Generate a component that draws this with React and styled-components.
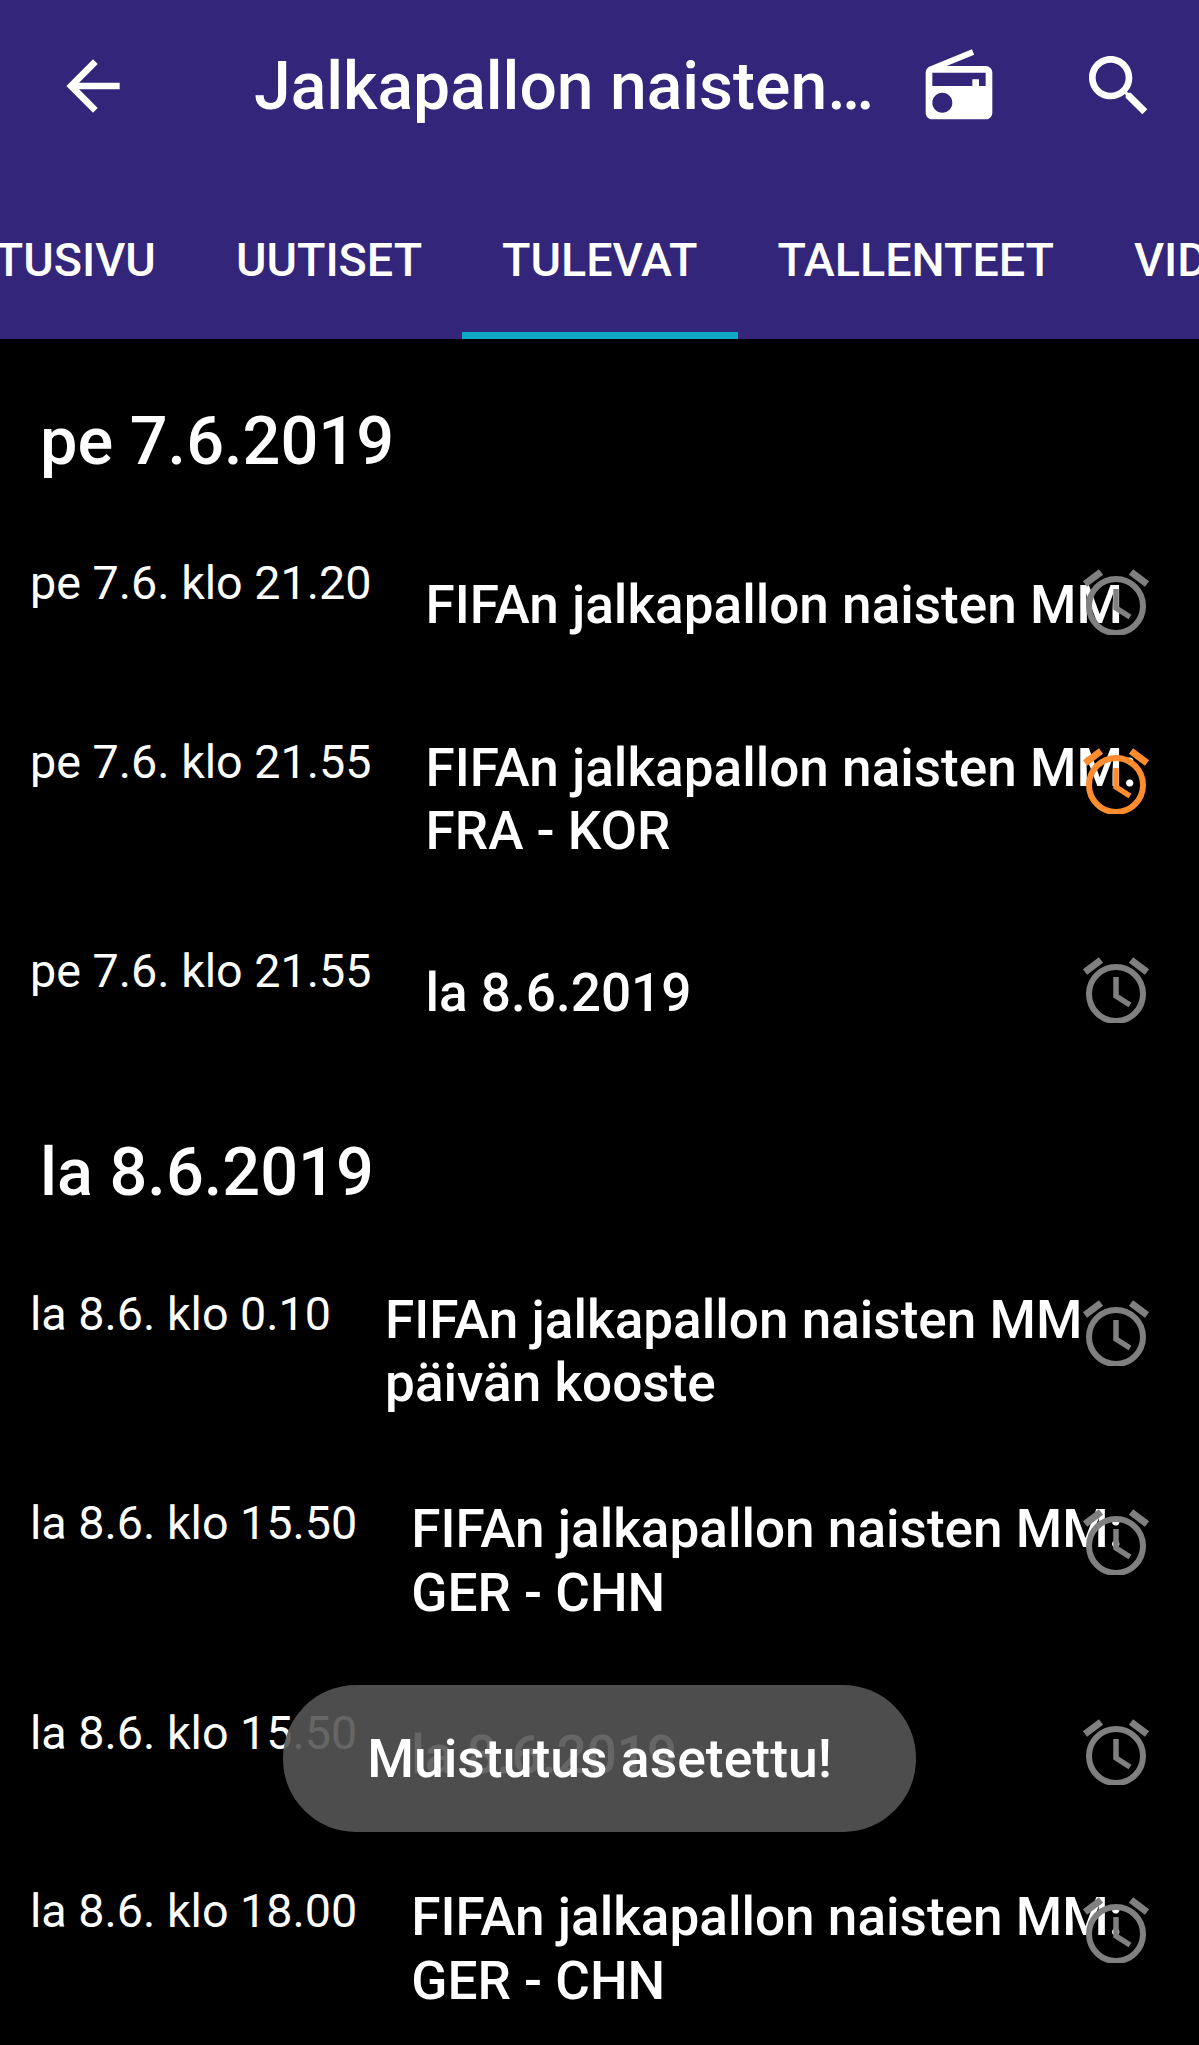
import styled, { createGlobalStyle } from "styled-components"

const GlobalStyle = createGlobalStyle`
  html, body {
    margin: 0;
    padding: 0;
    background: #000;
  }
  * {
    box-sizing: border-box;
  }
`

const Page = styled.div`
  position: relative;
  width: 1199px;
  height: 2045px;
  overflow: hidden;
  background: #000;
  color: #fff;
  font-family: Roboto, "Noto Sans", sans-serif;
`

const Header = styled.header`
  height: 339px;
  background: #32257a;
`

const Toolbar = styled.div`
  display: flex;
  align-items: center;
  height: 172px;
  padding: 0 40px 0 53px;
`

const IconButton = styled.div`
  display: flex;
  flex: none;
  width: 80px;
  height: 80px;
  margin-left: ${(p) => p.$gap || 0}px;
  & > svg {
    width: 80px;
    height: 80px;
    fill: #fff;
  }
`

const Title = styled.h1`
  flex: 1;
  margin: 0;
  padding-left: 121px;
  font-size: 66px;
  font-weight: 500;
  white-space: nowrap;
`

const Tabs = styled.nav`
  height: 167px;
  overflow: hidden;
`

const TabList = styled.div`
  display: flex;
  height: 100%;
  width: max-content;
  margin-left: -72px;
`

const Tab = styled.div`
  display: flex;
  align-items: center;
  padding: 16px 40px 0;
  font-size: 46.67px;
  font-weight: 500;
  white-space: nowrap;
  border-bottom: 7px solid ${(p) => (p.$active ? "#10a8c4" : "transparent")};
`

const Section = styled.section`
  padding-top: ${(p) => p.$top}px;
`

const DayHeading = styled.h2`
  margin: 0 0 ${(p) => p.$gap}px 40px;
  font-size: 66.67px;
  line-height: 70px;
  font-weight: 500;
`

const Row = styled.div`
  position: relative;
  display: flex;
  align-items: flex-start;
  min-height: 96px;
  margin-bottom: 82.5px;
  padding-left: 30px;
`

const When = styled.div`
  flex: none;
  width: max-content;
  margin-right: 54px;
  font-size: 46.67px;
  line-height: 50px;
`

const ShowTitle = styled.div`
  align-self: center;
  white-space: nowrap;
  font-size: 53.1px;
  line-height: 63.5px;
  font-weight: 500;
`

const Alarm = styled.svg`
  position: absolute;
  top: 1px;
  left: 1081px;
  width: 70px;
  height: 76px;
  fill: none;
  stroke: ${(p) => (p.$on ? "#ff8c2e" : "#808080")};
  stroke-width: 6;
`

const Toast = styled.div`
  position: absolute;
  top: 1685px;
  left: 283px;
  display: flex;
  align-items: center;
  justify-content: center;
  width: 633px;
  height: 147px;
  border-radius: 73px;
  background: rgba(85, 85, 85, 0.9);
  font-size: 53.5px;
  font-weight: 500;
`

const days = [
  {
    heading: "pe 7.6.2019",
    top: 67,
    gap: 82,
    rows: [
      { when: "pe 7.6. klo 21.20", title: ["FIFAn jalkapallon naisten MM"] },
      { when: "pe 7.6. klo 21.55", title: ["FIFAn jalkapallon naisten MM:", "FRA - KOR"], on: true },
      { when: "pe 7.6. klo 21.55", title: ["la 8.6.2019"] },
    ],
  },
  {
    heading: "la 8.6.2019",
    top: 12,
    gap: 82,
    rows: [
      { when: "la 8.6. klo 0.10", title: ["FIFAn jalkapallon naisten MM", "päivän kooste"] },
      { when: "la 8.6. klo 15.50", title: ["FIFAn jalkapallon naisten MM:", "GER - CHN"] },
      { when: "la 8.6. klo 15.50", title: ["la 8.6.2019"] },
      { when: "la 8.6. klo 18.00", title: ["FIFAn jalkapallon naisten MM:", "GER - CHN"] },
    ],
  },
]

const tabs = ["ETUSIVU", "UUTISET", "TULEVAT", "TALLENTEET", "VIDEOT"]

const AlarmIcon = ({ on }) => (
  <Alarm $on={on} viewBox="0 0 70 76">
    <circle cx="35" cy="47" r="27" />
    <path strokeWidth="5.5" d="M35 30v19l14 9" />
    <path strokeWidth="7" d="M4 25 20 13M50 13 66 25" />
  </Alarm>
)

const App = () => {
  return (
    <Page>
      <GlobalStyle />
      <Header>
        <Toolbar>
          <IconButton>
            <svg viewBox="0 0 24 24">
              <path d="M20 11H7.83l5.59-5.59L12 4l-8 8 8 8 1.41-1.41L7.83 13H20v-2z" />
            </svg>
          </IconButton>
          <Title>Jalkapallon naisten…</Title>
          <IconButton>
            <svg viewBox="0 0 24 24">
              <path d="M3.24 6.15C2.51 6.43 2 7.17 2 8v12c0 1.1.89 2 2 2h16c1.11 0 2-.9 2-2V8c0-1.11-.89-2-2-2H8.3l8.26-3.34L15.88 1 3.24 6.15zM7 20c-1.66 0-3-1.34-3-3s1.34-3 3-3 3 1.34 3 3-1.34 3-3 3zm13-8h-2v-2h-2v2H4V8h16v4z" />
            </svg>
          </IconButton>
          <IconButton $gap={80}>
            <svg viewBox="0 0 24 24">
              <path d="M15.5 14h-.79l-.28-.27C15.41 12.59 16 11.11 16 9.5 16 5.91 13.09 3 9.5 3S3 5.91 3 9.5 5.91 16 9.5 16c1.61 0 3.09-.59 4.23-1.57l.27.28v.79l5 4.99L20.49 19l-4.99-5zm-6 0C7.01 14 5 11.99 5 9.5S7.01 5 9.5 5 14 7.01 14 9.5 11.99 14 9.5 14z" />
            </svg>
          </IconButton>
        </Toolbar>
        <Tabs>
          <TabList>
            {tabs.map((t) => (
              <Tab key={t} $active={t === "TULEVAT"}>
                {t}
              </Tab>
            ))}
          </TabList>
        </Tabs>
      </Header>
      {days.map((d) => (
        <Section key={d.heading} $top={d.top}>
          <DayHeading $gap={d.gap}>{d.heading}</DayHeading>
          {d.rows.map((r, i) => (
            <Row key={i}>
              <When>{r.when}</When>
              <ShowTitle>
                {r.title.map((line) => (
                  <div key={line}>{line}</div>
                ))}
              </ShowTitle>
              <AlarmIcon on={r.on} />
            </Row>
          ))}
        </Section>
      ))}
      <Toast>Muistutus asetettu!</Toast>
    </Page>
  )
}

export default App
